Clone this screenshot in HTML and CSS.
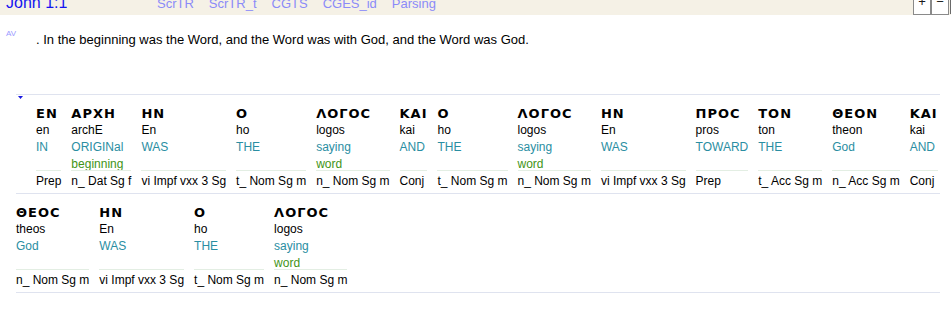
FILE: index.html
```html
<!DOCTYPE html>
<html lang="en">
<head>
<meta charset="utf-8">
<title>John 1:1</title>
<link rel="stylesheet" href="styles.css">
</head>
<body>
<div class="bar">
  <span class="ref">John 1:1</span>
  <nav class="tabs">
    <a class="tab">ScrTR</a>
    <a class="tab">ScrTR_t</a>
    <a class="tab">CGTS</a>
    <a class="tab">CGES_id</a>
    <a class="tab">Parsing</a>
  </nav>
  <div class="zoom">
    <span class="zb">+</span><span class="zb">&minus;</span><span class="edge"></span>
  </div>
</div>

<div class="verse">
  <span class="ver">AV</span>
  <p class="txt">. In the beginning was the Word, and the Word was with God, and the Word was God.</p>
</div>

<div class="inter">
  <div class="row">
    <span class="mark"><svg width="5" height="3" viewBox="0 0 5 3"><path d="M0 0H5L2.5 3Z" fill="#1818e0"/></svg></span>
    <div class="w"><div class="gk">ΕΝ</div><div class="tr">en</div><div class="gls"><div class="g1">IN</div></div><div class="ps">Prep</div></div>
    <div class="w"><div class="gk">ΑΡΧΗ</div><div class="tr">archE</div><div class="gls"><div class="g1">ORIGINal</div><div class="g2">beginning</div></div><div class="ps">n_ Dat Sg f</div></div>
    <div class="w"><div class="gk">ΗΝ</div><div class="tr">En</div><div class="gls"><div class="g1">WAS</div></div><div class="ps">vi Impf vxx 3 Sg</div></div>
    <div class="w"><div class="gk">Ο</div><div class="tr">ho</div><div class="gls"><div class="g1">THE</div></div><div class="ps">t_ Nom Sg m</div></div>
    <div class="w"><div class="gk">ΛΟΓΟϹ</div><div class="tr">logos</div><div class="gls"><div class="g1">saying</div><div class="g2">word</div></div><div class="ps">n_ Nom Sg m</div></div>
    <div class="w"><div class="gk">ΚΑΙ</div><div class="tr">kai</div><div class="gls"><div class="g1">AND</div></div><div class="ps">Conj</div></div>
    <div class="w"><div class="gk">Ο</div><div class="tr">ho</div><div class="gls"><div class="g1">THE</div></div><div class="ps">t_ Nom Sg m</div></div>
    <div class="w"><div class="gk">ΛΟΓΟϹ</div><div class="tr">logos</div><div class="gls"><div class="g1">saying</div><div class="g2">word</div></div><div class="ps">n_ Nom Sg m</div></div>
    <div class="w"><div class="gk">ΗΝ</div><div class="tr">En</div><div class="gls"><div class="g1">WAS</div></div><div class="ps">vi Impf vxx 3 Sg</div></div>
    <div class="w"><div class="gk">ΠΡΟϹ</div><div class="tr">pros</div><div class="gls"><div class="g1">TOWARD</div></div><div class="ps">Prep</div></div>
    <div class="w"><div class="gk">ΤΟΝ</div><div class="tr">ton</div><div class="gls"><div class="g1">THE</div></div><div class="ps">t_ Acc Sg m</div></div>
    <div class="w"><div class="gk">ΘΕΟΝ</div><div class="tr">theon</div><div class="gls"><div class="g1">God</div></div><div class="ps">n_ Acc Sg m</div></div>
    <div class="w"><div class="gk">ΚΑΙ</div><div class="tr">kai</div><div class="gls"><div class="g1">AND</div></div><div class="ps">Conj</div></div>
  </div>
  <div class="row">
    <div class="w"><div class="gk">ΘΕΟϹ</div><div class="tr">theos</div><div class="gls"><div class="g1">God</div></div><div class="ps">n_ Nom Sg m</div></div>
    <div class="w"><div class="gk">ΗΝ</div><div class="tr">En</div><div class="gls"><div class="g1">WAS</div></div><div class="ps">vi Impf vxx 3 Sg</div></div>
    <div class="w"><div class="gk">Ο</div><div class="tr">ho</div><div class="gls"><div class="g1">THE</div></div><div class="ps">t_ Nom Sg m</div></div>
    <div class="w"><div class="gk">ΛΟΓΟϹ</div><div class="tr">logos</div><div class="gls"><div class="g1">saying</div><div class="g2">word</div></div><div class="ps">n_ Nom Sg m</div></div>
  </div>
</div>
</body>
</html>
```

FILE: styles.css
```css
html, body {
  margin: 0;
  padding: 0;
  background: #ffffff;
  font-family: "Liberation Sans", Arial, sans-serif;
  color: #000;
}

.bar {
  display: flex;
  align-items: flex-start;
  height: 15px;
  overflow: hidden;
  background: #f5f1e6;
  padding-left: 6px;
}

.ref {
  width: 151px;
  flex: none;
  font-size: 16px;
  line-height: 16px;
  margin-top: -5px;
  color: #1414f0;
  white-space: nowrap;
}

.tabs {
  display: flex;
  gap: 15px;
  margin-top: -3px;
}

.tab {
  font-size: 13px;
  line-height: 13px;
  color: #8b8bf8;
  white-space: nowrap;
}

.zoom {
  margin-left: auto;
  display: flex;
  align-items: flex-start;
}

.zb {
  width: 16px;
  height: 17px;
  margin-top: -4px;
  border: 1px solid #8a8a8a;
  background: #fff;
  font-size: 13px;
  line-height: 9px;
  text-align: center;
  color: #1a1a1a;
}

.edge {
  width: 1px;
  height: 18px;
  margin-top: -4px;
  margin-left: 1px;
  background: #6a6a6a;
}

.verse {
  display: flex;
  align-items: flex-start;
  margin-top: 14px;
  padding-left: 6px;
}

.ver {
  width: 30px;
  flex: none;
  font-size: 8px;
  line-height: 9px;
  color: #9a9aff;
}

.txt {
  margin: 3px 0 0;
  font-size: 13px;
  line-height: 15px;
  white-space: nowrap;
}

.inter {
  margin: 47px 11px 0 16px;
  border-top: 1px solid #dfe3ef;
}

.row {
  display: flex;
  gap: 10px;
  padding: 10px 0 3px;
  border-bottom: 1px solid #dfe3ef;
}

.mark {
  width: 8px;
  flex: none;
  align-self: flex-start;
  margin-top: -9px;
  padding-left: 2px;
  line-height: 0;
}

.mark svg {
  display: block;
}

.w {
  display: flex;
  flex-direction: column;
  flex: none;
  font-size: 12px;
  line-height: 17px;
  white-space: nowrap;
}

.gk {
  font-family: "DejaVu Sans", sans-serif;
  font-weight: bold;
  font-size: 13px;
  line-height: 17px;
  letter-spacing: 1px;
}

.gls {
  flex: 1;
  margin-bottom: -3px;
}

.g1 {
  color: #2a8ea2;
}

.g2 {
  color: #3f9417;
}

.ps {
  border-top: 1px solid #e3eee3;
  padding-top: 2px;
}
```
